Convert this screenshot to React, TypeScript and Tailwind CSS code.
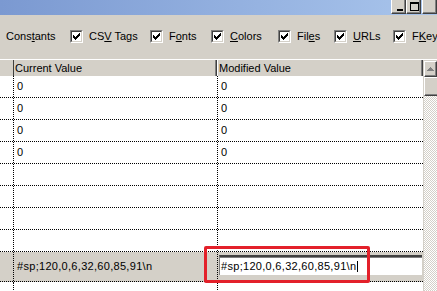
import React from 'react'

function CheckBox() {
  return (
    <span className="block w-[13px] h-[13px] border border-t-[#808080] border-l-[#808080] border-b-white border-r-white">
      <span className="block w-full h-full border border-t-[#404040] border-l-[#404040] border-b-[#d4d0c8] border-r-[#d4d0c8] bg-white">
        <svg width="9" height="9" viewBox="0 0 9 9" shapeRendering="crispEdges" className="block">
          <path
            d="M7 1h1v1h-1z M6 2h2v1h-2z M1 3h1v1h-1z M5 3h3v1h-3z M1 4h2v1h-2z M4 4h3v1h-3z M1 5h5v1h-5z M2 6h3v1h-3z M3 7h1v1h-1z"
            fill="#000"
          />
        </svg>
      </span>
    </span>
  )
}

interface Option {
  pre: string
  key: string
  post: string
  width: string
}

const options: Option[] = [
  { pre: 'CS', key: 'V', post: ' Tags', width: 'w-[80px]' },
  { pre: 'F', key: 'o', post: 'nts', width: 'w-[61px]' },
  { pre: '', key: 'C', post: 'olors', width: 'w-[67px]' },
  { pre: 'Fil', key: 'e', post: 's', width: 'w-[56px]' },
  { pre: '', key: 'U', post: 'RLs', width: 'w-[59px]' },
  { pre: 'F', key: 'K', post: 'eys', width: 'w-[60px]' },
]

function TitleButton({ children, className = '' }: { children?: React.ReactNode; className?: string }) {
  return (
    <div
      className={`w-[15px] h-[14px] bg-[#d4d0c8] border-l border-l-white border-b border-b-[#404040] border-r border-r-[#404040] shadow-[inset_-1px_-1px_0_#808080] ${className}`}
    >
      {children}
    </div>
  )
}

function Row({ a, b }: { a?: string; b?: string }) {
  return (
    <div className="flex h-[22px] border-b border-dotted border-black bg-white">
      <div className="w-[14px] border-r border-dotted border-black" />
      <div className="w-[204px] flex items-center pl-[3px] border-r border-dotted border-black">{a}</div>
      <div className="w-[205px] flex items-center pl-[3px]">{b}</div>
    </div>
  )
}

const value = '#sp;120,0,6,32,60,85,91\\n'

export default function App() {
  return (
    <div className="relative w-[437px] h-[291px] overflow-hidden bg-[#d4d0c8] text-[11px] leading-none text-black font-[Liberation_Sans,Arial,sans-serif]">
      {/* title bar */}
      <div className="h-[15px] flex justify-end items-start bg-gradient-to-r from-[#7b99d1] to-[#a9c5ec]">
        <TitleButton>
          <svg width="13" height="13" viewBox="0 0 13 13" shapeRendering="crispEdges" className="block">
            <path d="M5 9h6v2h-6z" fill="#000" />
          </svg>
        </TitleButton>
        <TitleButton>
          <svg width="13" height="13" viewBox="0 0 13 13" shapeRendering="crispEdges" className="block">
            <path d="M3 2h9v9h-9z M4 4v6h7v-6z" fill="#000" fillRule="evenodd" />
          </svg>
        </TitleButton>
        <TitleButton className="ml-[1px]" />
      </div>

      {/* options strip */}
      <div className="h-[44px] flex items-center pl-[6px] pb-[2px] whitespace-nowrap">
        <span className="w-[64px] shrink-0">
          Cons<span className="underline">t</span>ants
        </span>
        {options.map((o) => (
          <div key={o.key + o.post} className={`flex items-center shrink-0 ${o.width}`}>
            <CheckBox />
            <span className="ml-[6px]">
              {o.pre}
              <span className="underline">{o.key}</span>
              {o.post}
            </span>
          </div>
        ))}
      </div>

      {/* grid */}
      <div className="flex border-t border-white">
        <div className="w-[423px] shrink-0">
          <div className="flex h-[16px] bg-[#d4d0c8]">
            <div className="w-[14px] border-r border-[#404040]" />
            <div className="w-[203px] flex items-center pl-[1px] border-r border-[#404040] shadow-[inset_-1px_0_0_#808080]">
              Current Value
            </div>
            <div className="w-[206px] flex items-center pl-[1px] border-l border-white border-r border-r-[#404040] shadow-[inset_-1px_0_0_#808080]">
              Modified Value
            </div>
          </div>

          <Row a="0" b="0" />
          <Row a="0" b="0" />
          <Row a="0" b="0" />
          <Row a="0" b="0" />
          <Row />
          <Row />
          <Row />
          <Row />

          {/* row being edited */}
          <div className="flex h-[30px] border-b border-dotted border-black bg-[#d4d0c8]">
            <div className="w-[14px] border-r border-dotted border-black" />
            <div className="w-[204px] flex items-center pl-[3px] tracking-[0.3px] border-r border-dotted border-black">{value}</div>
            <div className="w-[205px] pl-[1px] pt-[3px]">
              <div className="w-[203px] h-[20px] flex items-center pl-[1px] tracking-[0.3px] bg-white border-t-2 border-t-[#404040] border-l border-l-[#808080] shadow-[inset_0_1px_0_#808080]">
                {value}
                <span className="ml-[1px] w-[1px] h-[11px] bg-black" />
              </div>
            </div>
          </div>

          <div className="flex h-[12px] bg-white">
            <div className="w-[14px] border-r border-dotted border-black" />
            <div className="w-[204px] border-r border-dotted border-black" />
            <div className="w-[205px]" />
          </div>
        </div>

        {/* vertical scrollbar */}
        <div className="w-[14px] shrink-0 flex flex-col pl-[1px] pt-[1px] bg-[#d4d0c8]">
          <div className="h-[16px] flex items-center justify-center border-t border-l border-white border-b border-r border-b-[#404040] border-r-[#404040] shadow-[inset_-1px_-1px_0_#808080]">
            <svg width="7" height="4" viewBox="0 0 7 4" shapeRendering="crispEdges" className="block">
              <path d="M3 0h1v1h1v1h1v1h1v1h-7v-1h1v-1h1v-1h1z" fill="#808080" />
            </svg>
          </div>
          <div className="h-[19px] border-t border-l border-white border-b border-b-[#404040] shadow-[inset_0_-1px_0_#808080]" />
          <div className="flex-1 bg-[repeating-conic-gradient(#ffffff_0%_25%,#d4d0c8_0%_50%)] bg-size-[2px_2px]" />
        </div>
      </div>

      {/* highlight annotation */}
      <div className="absolute left-[204px] top-[246px] w-[166px] h-[37px] border-[3px] border-[#e3202a] rounded-[2px]" />
    </div>
  )
}
